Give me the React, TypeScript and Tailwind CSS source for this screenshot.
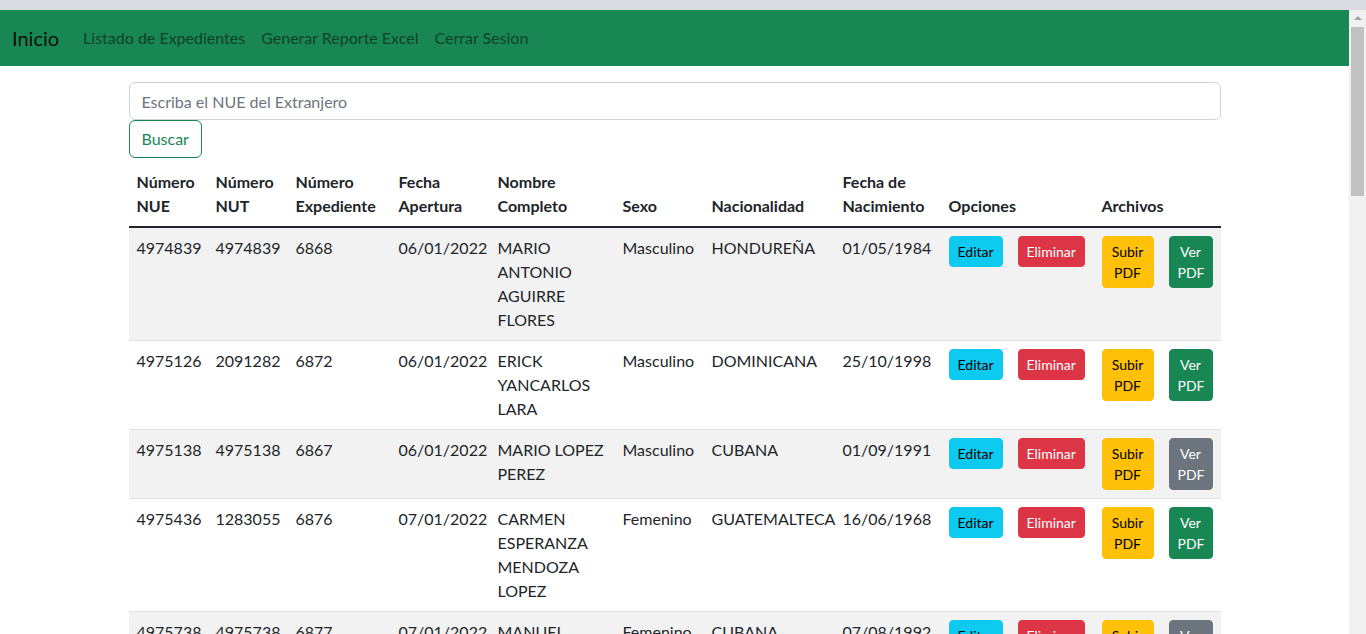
import React from "react";

type Row = {
  nue: string;
  nut: string;
  exp: string;
  apertura: string;
  nombre: string;
  sexo: string;
  nacionalidad: string;
  nacimiento: string;
  tienePdf: boolean;
};

const rows: Row[] = [
  { nue: "4974839", nut: "4974839", exp: "6868", apertura: "06/01/2022", nombre: "MARIO ANTONIO AGUIRRE FLORES", sexo: "Masculino", nacionalidad: "HONDUREÑA", nacimiento: "01/05/1984", tienePdf: true },
  { nue: "4975126", nut: "2091282", exp: "6872", apertura: "06/01/2022", nombre: "ERICK YANCARLOS LARA", sexo: "Masculino", nacionalidad: "DOMINICANA", nacimiento: "25/10/1998", tienePdf: true },
  { nue: "4975138", nut: "4975138", exp: "6867", apertura: "06/01/2022", nombre: "MARIO LOPEZ PEREZ", sexo: "Masculino", nacionalidad: "CUBANA", nacimiento: "01/09/1991", tienePdf: false },
  { nue: "4975436", nut: "1283055", exp: "6876", apertura: "07/01/2022", nombre: "CARMEN ESPERANZA MENDOZA LOPEZ", sexo: "Femenino", nacionalidad: "GUATEMALTECA", nacimiento: "16/06/1968", tienePdf: true },
  { nue: "4975738", nut: "4975738", exp: "6877", apertura: "07/01/2022", nombre: "MANUEL RODRIGUEZ SOTO", sexo: "Femenino", nacionalidad: "CUBANA", nacimiento: "07/08/1992", tienePdf: false },
  { nue: "4975801", nut: "4975801", exp: "6880", apertura: "08/01/2022", nombre: "JOSE LUIS MARTINEZ", sexo: "Masculino", nacionalidad: "SALVADOREÑA", nacimiento: "12/03/1987", tienePdf: true },
];

const btn = "rounded-[4px] px-2 py-1 text-[14px] leading-[21px] border";

export default function App() {
  return (
    <div className="h-[634px] overflow-hidden bg-white text-[#212529] font-['Lato','Liberation_Sans',sans-serif]">
      {/* browser strip */}
      <div className="h-[10px] bg-[#dadbe0]" />
      <div className="flex h-[624px]">
        <div className="flex-1 overflow-hidden">
          {/* navbar */}
          <nav className="flex h-[56px] items-center bg-[#198754] px-3">
            <span className="mr-4 text-[20px] leading-[30px] text-[rgba(0,0,0,0.9)]">Inicio</span>
            <a className="px-2 text-[16px] leading-6 text-[rgba(0,0,0,0.55)]">Listado de Expedientes</a>
            <a className="px-2 text-[16px] leading-6 text-[rgba(0,0,0,0.55)]">Generar Reporte Excel</a>
            <a className="px-2 text-[16px] leading-6 text-[rgba(0,0,0,0.55)]">Cerrar Sesion</a>
          </nav>

          <div className="mx-auto mt-4 w-[1092px]">
            <input
              className="block h-[38px] w-full rounded-[6px] border border-[#ced4da] px-3 text-[16px] leading-6 placeholder:text-[#6c757d] outline-none"
              placeholder="Escriba el NUE del Extranjero"
            />
            <button className="h-[38px] rounded-[6px] border border-[#198754] px-3 text-[16px] leading-6 text-[#198754]">
              Buscar
            </button>

            <table className="mt-1 w-full table-fixed border-collapse text-[16px] leading-6">
              <colgroup>
                <col className="w-[79px]" />
                <col className="w-[80px]" />
                <col className="w-[103px]" />
                <col className="w-[99px]" />
                <col className="w-[125px]" />
                <col className="w-[89px]" />
                <col className="w-[131px]" />
                <col className="w-[106px]" />
                <col className="w-[69px]" />
                <col className="w-[84px]" />
                <col className="w-[67px]" />
                <col className="w-[60px]" />
              </colgroup>
              <thead>
                <tr className="border-b-2 border-[#212529] text-left align-bottom font-bold">
                  <th className="p-2">Número NUE</th>
                  <th className="p-2">Número NUT</th>
                  <th className="p-2">Número Expediente</th>
                  <th className="p-2">Fecha Apertura</th>
                  <th className="p-2">Nombre Completo</th>
                  <th className="p-2">Sexo</th>
                  <th className="p-2">Nacionalidad</th>
                  <th className="p-2">Fecha de Nacimiento</th>
                  <th className="p-2 whitespace-nowrap">Opciones</th>
                  <th className="p-2"></th>
                  <th className="p-2 whitespace-nowrap">Archivos</th>
                  <th className="p-2"></th>
                </tr>
              </thead>
              <tbody>
                {rows.map((r, i) => (
                  <tr
                    key={r.nue}
                    className={`border-b border-[#dee2e6] align-top ${i % 2 === 0 ? "bg-[#f2f2f2]" : "bg-white"}`}
                  >
                    <td className="p-2">{r.nue}</td>
                    <td className="p-2">{r.nut}</td>
                    <td className="p-2">{r.exp}</td>
                    <td className="p-2">{r.apertura}</td>
                    <td className="p-2">{r.nombre}</td>
                    <td className="p-2">{r.sexo}</td>
                    <td className="p-2 whitespace-nowrap">{r.nacionalidad}</td>
                    <td className="p-2">{r.nacimiento}</td>
                    <td className="p-2">
                      <button className={`${btn} border-[#0dcaf0] bg-[#0dcaf0] text-black`}>Editar</button>
                    </td>
                    <td className="p-2">
                      <button className={`${btn} border-[#dc3545] bg-[#dc3545] text-white`}>Eliminar</button>
                    </td>
                    <td className="p-2">
                      <button className={`${btn} w-[52px] border-[#ffc107] bg-[#ffc107] text-black`}>Subir PDF</button>
                    </td>
                    <td className="p-2">
                      <button
                        className={`${btn} w-[44px] text-white ${r.tienePdf ? "border-[#198754] bg-[#198754]" : "border-[#6c757d] bg-[#6c757d]"}`}
                      >
                        Ver PDF
                      </button>
                    </td>
                  </tr>
                ))}
              </tbody>
            </table>
          </div>
        </div>

        {/* fake scrollbar */}
        <div className="flex w-[17px] flex-col items-center bg-[#f1f1f1]">
          <div className="mt-[6px] h-0 w-0 border-x-[4px] border-b-[4px] border-x-transparent border-b-[#a3a3a3]" />
          <div className="mt-[7px] h-[169px] w-[13px] bg-[#c1c1c1]" />
        </div>
      </div>
    </div>
  );
}
